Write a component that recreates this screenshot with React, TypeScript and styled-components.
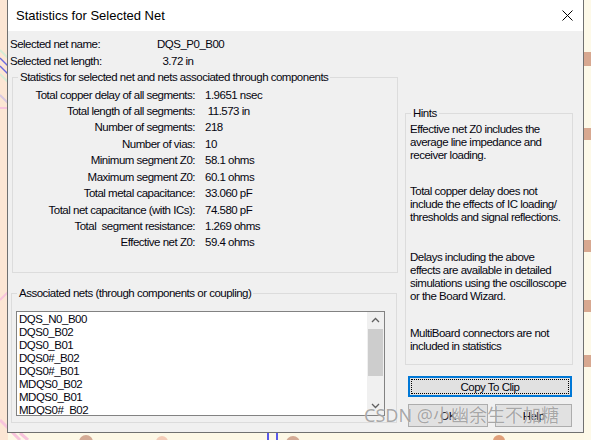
import React from "react";
import styled, { createGlobalStyle } from "styled-components";

const GlobalStyle = createGlobalStyle`
  html, body {
    margin: 0;
    padding: 0;
  }
  body {
    width: 591px;
    height: 440px;
    overflow: hidden;
    background: #fdf8e6;
    font-family: "Liberation Sans", Arial, sans-serif;
  }
`;

const stats: [string, string][] = [
  ["Total copper delay of all segments:", "1.9651 nsec"],
  ["Total length of all segments:", " 11.573 in"],
  ["Number of segments:", "218"],
  ["Number of vias:", "10"],
  ["Minimum segment Z0:", "58.1 ohms"],
  ["Maximum segment Z0:", "60.1 ohms"],
  ["Total metal capacitance:", "33.060 pF"],
  ["Total net capacitance (with ICs):", "74.580 pF"],
  ["Total  segment resistance:", "1.269 ohms"],
  ["Effective net Z0:", "59.4 ohms"],
];

const nets = [
  "DQS_N0_B00",
  "DQS0_B02",
  "DQS0_B01",
  "DQS0#_B02",
  "DQS0#_B01",
  "MDQS0_B02",
  "MDQS0_B01",
  "MDQS0#_B02",
  "MDQS0#_B01",
];

const hints: { lines: string[]; after: number }[] = [
  {
    lines: ["Effective net Z0 includes the", "average line impedance and", "receiver loading."],
    after: 23,
  },
  {
    lines: [
      "Total copper delay does not",
      "include the effects of IC loading/",
      "thresholds and signal reflections.",
    ],
    after: 27,
  },
  {
    lines: [
      "Delays including the above",
      "effects are available in detailed",
      "simulations using the oscilloscope",
      "or the Board Wizard.",
    ],
    after: 24,
  },
  { lines: ["MultiBoard connectors are not", "included in statistics"], after: 0 },
];

const Backdrop = () => (
  <BackdropSvg width="591" height="440" viewBox="0 0 591 440">
    <rect x="0" y="0" width="8" height="440" fill="#fce6d4" />
    <rect x="584" y="0" width="7" height="440" fill="#fdf9e8" />
    <line x1="0" y1="50" x2="8" y2="58" stroke="#d6ecd6" strokeWidth="2" />
    <line x1="0" y1="58" x2="8" y2="66" stroke="#6a6ae0" strokeWidth="1.5" />
    <line x1="0" y1="66" x2="8" y2="74" stroke="#6a6ae0" strokeWidth="1.5" />
    <line x1="0" y1="74" x2="8" y2="82" stroke="#d6ecd6" strokeWidth="2" />
    <line x1="0" y1="95" x2="8" y2="103" stroke="#d8c8e0" strokeWidth="2" />
    <line x1="0" y1="108" x2="8" y2="108" stroke="#f8c4dc" strokeWidth="2" />
    <line x1="0" y1="300" x2="8" y2="292" stroke="#f8c4dc" strokeWidth="2" />
    <line x1="0" y1="420" x2="20" y2="440" stroke="#f8c4dc" strokeWidth="3" />
    <line x1="20" y1="433" x2="28" y2="440" stroke="#f8c4dc" strokeWidth="3" />
    <rect x="584" y="52" width="7" height="14" fill="#d8a890" />
    <rect x="584" y="128" width="7" height="12" fill="#d8a890" />
    <rect x="584" y="240" width="7" height="12" fill="#d8a890" />
    <rect x="584" y="300" width="7" height="12" fill="#d8a890" />
    <rect x="584" y="355" width="7" height="12" fill="#d8a890" />
    <circle cx="86" cy="442" r="7" fill="#d4ab95" />
    <circle cx="162" cy="442" r="6" fill="#f4cdb8" />
    <line x1="268" y1="433" x2="268" y2="440" stroke="#5a5ae8" strokeWidth="2" />
    <line x1="277" y1="433" x2="277" y2="440" stroke="#5a5ae8" strokeWidth="2" />
    <circle cx="293" cy="443" r="7" fill="#d4ab95" />
    <circle cx="499" cy="441" r="6" fill="#e0a07a" />
  </BackdropSvg>
);

const Chevron = ({ up }: { up?: boolean }) => (
  <svg width="9" height="6" viewBox="0 0 9 6">
    <polyline
      points={up ? "1,5 4.5,1.5 8,5" : "1,1 4.5,4.5 8,1"}
      fill="none"
      stroke="#606060"
      strokeWidth="1.3"
    />
  </svg>
);

export default function App() {
  return (
    <Page>
      <GlobalStyle />
      <Backdrop />
      <Window>
        <TitleBar>
          <Title>Statistics for Selected Net</Title>
          <CloseIcon width="11" height="11" viewBox="0 0 11 11">
            <path d="M0.5 0.5 L10.5 10.5 M10.5 0.5 L0.5 10.5" stroke="#000" strokeWidth="1" />
          </CloseIcon>
        </TitleBar>
        <Body>
          <LeftColumn>
            <InfoGrid>
              <span>Selected net name:</span>
              <Value>DQS_P0_B00</Value>
              <span>Selected net length:</span>
              <Value>{"  3.72 in"}</Value>
            </InfoGrid>
            <StatsGroup>
              <Legend>Statistics for selected net and nets associated through components</Legend>
              <StatsGrid>
                {stats.map(([label, value]) => (
                  <React.Fragment key={label}>
                    <StatLabel>{label}</StatLabel>
                    <Value>{value}</Value>
                  </React.Fragment>
                ))}
              </StatsGrid>
            </StatsGroup>
            <NetsGroup>
              <Legend>Associated nets (through components or coupling)</Legend>
              <ListBox>
                <ListItems>
                  {nets.map((n) => (
                    <ListItem key={n}>{n}</ListItem>
                  ))}
                </ListItems>
                <ScrollBar>
                  <ScrollArrow>
                    <Chevron up />
                  </ScrollArrow>
                  <ScrollTrack>
                    <ScrollThumb />
                  </ScrollTrack>
                  <ScrollArrow>
                    <Chevron />
                  </ScrollArrow>
                </ScrollBar>
              </ListBox>
            </NetsGroup>
          </LeftColumn>
          <RightColumn>
            <HintsGroup>
              <Legend>Hints</Legend>
              <HintText>
                {hints.map((h, i) => (
                  <HintPara key={i} $after={h.after}>
                    {h.lines.map((l, j) => (
                      <React.Fragment key={j}>
                        {l}
                        {j < h.lines.length - 1 && <br />}
                      </React.Fragment>
                    ))}
                  </HintPara>
                ))}
              </HintText>
            </HintsGroup>
            <CopyButton>Copy To Clip</CopyButton>
            <ButtonRow>
              <DialogButton $width={80}>OK</DialogButton>
              <DialogButton $width={77}>Help</DialogButton>
            </ButtonRow>
          </RightColumn>
        </Body>
      </Window>
      <Watermark>CSDN @小幽余生不加糖</Watermark>
    </Page>
  );
}

const Page = styled.div`
  position: relative;
  width: 591px;
  height: 440px;
  overflow: hidden;
  padding-left: 7px;
  box-sizing: border-box;
  font-size: 11.5px;
  letter-spacing: -0.5px;
  color: #05050f;
`;

const BackdropSvg = styled.svg`
  position: absolute;
  left: 0;
  top: 0;
`;

const Window = styled.div`
  position: relative;
  width: 577px;
  height: 433px;
  box-sizing: border-box;
  border: 1px solid #707070;
  border-top: none;
  background: #f0f0f0;
  display: flex;
  flex-direction: column;
`;

const TitleBar = styled.div`
  height: 31px;
  flex: none;
  background: #fff;
  display: flex;
  align-items: center;
  justify-content: space-between;
  padding: 0 10px 0 8px;
`;

const Title = styled.div`
  font-size: 13px;
  letter-spacing: 0;
  color: #000;
  padding-bottom: 1px;
`;

const CloseIcon = styled.svg`
  display: block;
`;

const Body = styled.div`
  flex: 1;
  display: grid;
  grid-template-columns: 392px 1fr;
  line-height: 13px;
`;

const LeftColumn = styled.div`
  display: flex;
  flex-direction: column;
`;

const RightColumn = styled.div`
  display: flex;
  flex-direction: column;
`;

const InfoGrid = styled.div`
  display: grid;
  grid-template-columns: 147px 1fr;
  grid-auto-rows: 17px;
  align-items: center;
  padding: 4.5px 0 0 2px;
`;

const Value = styled.span`
  white-space: pre;
`;

const Group = styled.fieldset`
  margin: 0;
  padding: 0;
  border: 1px solid #dcdcdc;
  box-sizing: border-box;
  min-width: 0;
`;

const Legend = styled.legend`
  padding: 0 2px;
  margin-left: 5px;
  line-height: 13px;
  white-space: nowrap;
`;

const StatsGroup = styled(Group)`
  margin: 1px 0 0 4px;
  width: 386px;
  height: 202px;
`;

const StatsGrid = styled.div`
  display: grid;
  grid-template-columns: 182px 1fr;
  column-gap: 10px;
  grid-auto-rows: 16.45px;
  align-items: center;
  padding-top: 3.3px;
`;

const StatLabel = styled.span`
  text-align: right;
  white-space: pre;
`;

const NetsGroup = styled(Group)`
  margin: 14.5px 0 0 3px;
  width: 386px;
  height: 136px;
`;

const ListBox = styled.div`
  margin: 10.5px 0 0 4px;
  width: 369px;
  height: 105px;
  box-sizing: border-box;
  border: 1px solid #828282;
  background: #fff;
  display: flex;
  overflow: hidden;
`;

const ListItems = styled.div`
  flex: 1;
  padding: 1px 0 0 2px;
  overflow: hidden;
`;

const ListItem = styled.div`
  height: 13px;
  line-height: 13px;
  white-space: nowrap;
`;

const ScrollBar = styled.div`
  width: 17px;
  flex: none;
  background: #f0f0f0;
  display: flex;
  flex-direction: column;
`;

const ScrollArrow = styled.div`
  height: 17px;
  flex: none;
  display: flex;
  align-items: center;
  justify-content: center;
`;

const ScrollTrack = styled.div`
  flex: 1;
  padding: 0 1px;
`;

const ScrollThumb = styled.div`
  height: 47px;
  background: #cdcdcd;
`;

const HintsGroup = styled(Group)`
  margin: 75.5px 0 0 5px;
  width: 168px;
  height: 258px;
`;

const HintText = styled.div`
  padding: 3px 0 0 4px;
  white-space: nowrap;
`;

const HintPara = styled.p<{ $after: number }>`
  margin: 0 0 ${(p) => p.$after}px;
  line-height: 13px;
`;

const ButtonBase = styled.button`
  font-family: "Liberation Sans", Arial, sans-serif;
  font-size: 11.5px;
  letter-spacing: -0.5px;
  color: #05050f;
  background: #e1e1e1;
  padding: 0;
  box-sizing: border-box;
  cursor: default;
`;

const CopyButton = styled(ButtonBase)`
  position: relative;
  margin: 11.5px 0 0 8px;
  width: 164px;
  height: 21px;
  border: 2px solid #0078d7;
  &::after {
    content: "";
    position: absolute;
    inset: 1px;
    border: 1px dotted #000;
  }
`;

const ButtonRow = styled.div`
  display: flex;
  gap: 7px;
  margin: 7px 0 0 8px;
`;

const DialogButton = styled(ButtonBase)<{ $width: number }>`
  width: ${(p) => p.$width}px;
  height: 23px;
  border: 1px solid #adadad;
`;

const Watermark = styled.div`
  position: absolute;
  left: 364px;
  top: 403px;
  font-family: "Noto Sans", "Noto Sans CJK SC", sans-serif;
  font-size: 18px;
  line-height: 24px;
  letter-spacing: 0;
  color: rgba(140, 140, 140, 0.75);
  text-shadow: 0 0 1px rgba(255, 255, 255, 0.9);
  white-space: nowrap;
  pointer-events: none;
`;
